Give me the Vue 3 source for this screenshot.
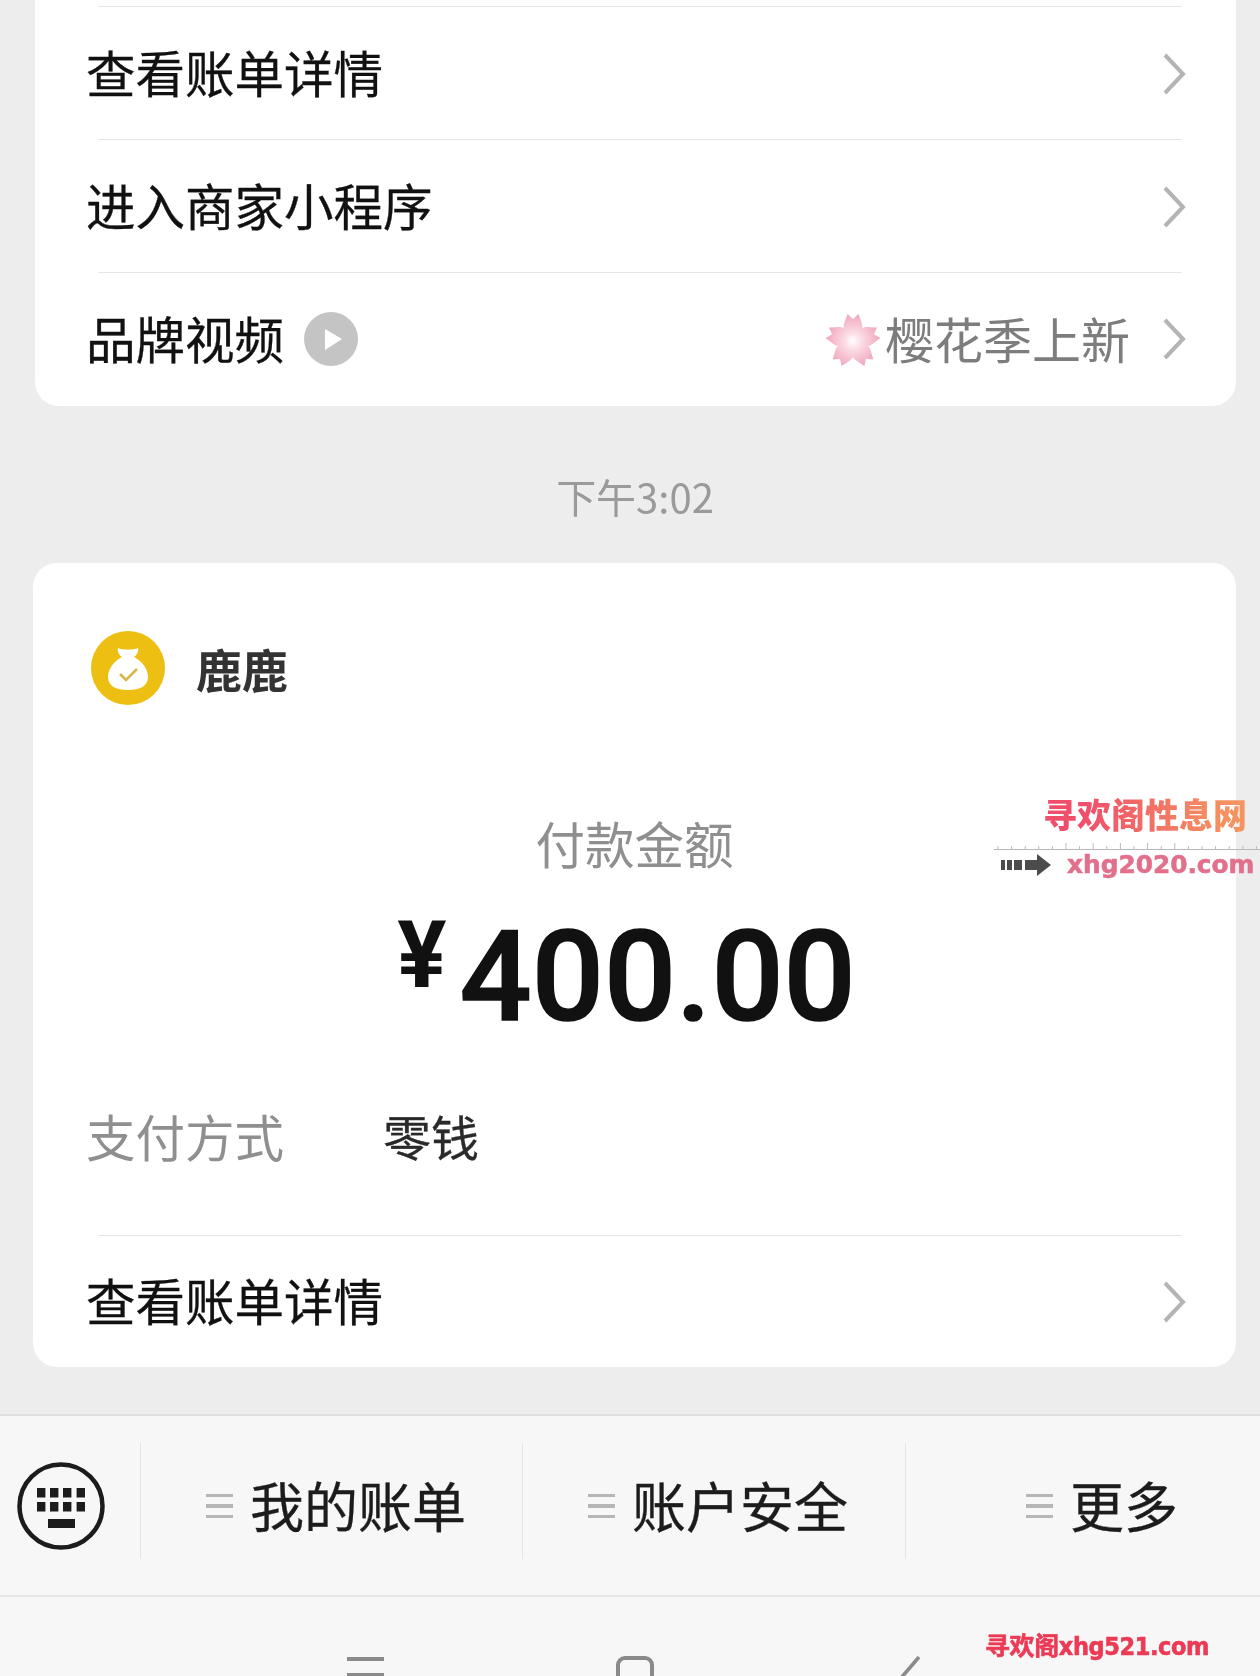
<script setup>
const menus = [
  { label: '我的账单', cls: 'm1' },
  { label: '账户安全', cls: 'm2' },
  { label: '更多', cls: 'm3' }
]
const ticks = Array.from({ length: 20 }, (_, i) => 4 + i * 13.6)
const petals = [0, 72, 144, 216, 288]
</script>

<template>
  <div class="page">
    <section class="card card-top">
      <div class="sliver"></div>
      <div class="row line"><span class="row-text">查看账单详情</span><svg class="chev" viewBox="0 0 24 44"><path d="M3 3 L21 22 L3 41" /></svg></div>
      <div class="row line"><span class="row-text">进入商家小程序</span><svg class="chev" viewBox="0 0 24 44"><path d="M3 3 L21 22 L3 41" /></svg></div>
      <div class="row">
        <span class="row-text">品牌视频</span>
        <svg class="play" viewBox="0 0 54 54"><circle cx="27" cy="27" r="27" fill="#c4c4c4" /><path d="M21 17 L38 27 L21 38 Z" fill="#fff" /></svg>
        <span class="spacer"></span>
        <svg class="sakura" viewBox="-28 -28 56 54">
          <defs>
            <radialGradient id="petal" gradientUnits="userSpaceOnUse" cx="0" cy="0" r="28">
              <stop offset="0" stop-color="#ffffff" />
              <stop offset="0.3" stop-color="#fbdde6" />
              <stop offset="1" stop-color="#f2a3bb" />
            </radialGradient>
          </defs>
          <g v-for="a in petals" :key="a" :transform="`rotate(${a})`">
            <path fill="url(#petal)" d="M0 0 C-7 -4 -12 -12 -8 -20 L-5.5 -27 L0 -22 L5.5 -27 L8 -20 C12 -12 7 -4 0 0 Z" />
          </g>
        </svg>
        <span class="promo">樱花季上新</span>
        <svg class="chev" viewBox="0 0 24 44"><path d="M3 3 L21 22 L3 41" /></svg>
      </div>
    </section>

    <div class="time">下午3:02</div>

    <section class="card card-pay">
      <header class="payee">
        <svg class="logo" viewBox="0 0 74 74">
          <circle cx="37" cy="37" r="37" fill="#edbf12" />
          <path fill="#fff" d="M27 17 C31 19 43 19 47 17 C48 20 46 24 43 26 C51 30 57 38 57 46 C57 55 49 59 37 59 C25 59 17 55 17 46 C17 38 23 30 31 26 C28 24 26 20 27 17 Z" />
          <path d="M29 43 L35 49 L46 38" fill="none" stroke="#d9b64a" stroke-width="2.6" />
        </svg>
        <span class="name">鹿鹿</span>
      </header>
      <div class="pay-title">付款金额</div>
      <div class="amount"><span class="yen">¥</span><span class="num">400.00</span></div>
      <div class="method"><span class="method-key">支付方式</span><span class="method-val">零钱</span></div>
      <div class="divider"></div>
      <div class="row last"><span class="row-text">查看账单详情</span><svg class="chev" viewBox="0 0 24 44"><path d="M3 3 L21 22 L3 41" /></svg></div>
    </section>

    <nav class="menubar">
      <div class="kbd-cell">
        <svg class="kbd" viewBox="0 0 88 88">
          <circle cx="44" cy="44" r="41.5" fill="none" stroke="#1c1c1c" stroke-width="4.5" />
          <g fill="#1c1c1c">
            <rect x="20" y="26" width="8.4" height="9.5" /><rect x="33" y="26" width="8.4" height="9.5" /><rect x="46" y="26" width="8.4" height="9.5" /><rect x="59.6" y="26" width="8.4" height="9.5" />
            <rect x="20" y="40" width="8.4" height="9.5" /><rect x="33" y="40" width="8.4" height="9.5" /><rect x="46" y="40" width="8.4" height="9.5" /><rect x="59.6" y="40" width="8.4" height="9.5" />
            <rect x="31" y="57" width="27" height="9" />
          </g>
        </svg>
      </div>
      <div v-for="m in menus" :key="m.label" class="menu" :class="m.cls">
        <span class="ham"><i></i><i></i><i></i></span>
        <span class="menu-text">{{ m.label }}</span>
      </div>
    </nav>

    <footer class="sysnav">
      <span class="sys-menu"><i></i><i></i><i></i></span>
      <span class="sys-home"></span>
      <svg class="sys-back" viewBox="0 0 24 24"><path d="M20 1 L2 22" /></svg>
    </footer>

    <aside class="mark">
      <div class="mark-cn">寻欢阁性息网</div>
      <svg class="mark-rule" viewBox="0 0 266 10">
        <path d="M0 9.5 H266" stroke="#b9b9b9" stroke-width="1" />
        <path v-for="t in ticks" :key="t" :d="`M${t} 9 V${t % 3 < 1 ? 3 : 6}`" stroke="#bbb" stroke-width="1" />
      </svg>
      <div class="mark-line">
        <svg class="mark-arrow" viewBox="0 0 50 22">
          <g fill="#4c4c4c"><rect x="0" y="6" width="4" height="10" /><rect x="6" y="6" width="5" height="10" /><rect x="13" y="6" width="8" height="10" /><path d="M24 6 H36 V0 L50 11 L36 22 V16 H24 Z" /></g>
        </svg>
        <span class="mark-url">xhg2020.com</span>
      </div>
    </aside>
    <div class="mark-foot">寻欢阁xhg521.com</div>
  </div>
</template>

<style scoped>
.page {
  position: relative;
  width: 1260px;
  height: 1676px;
  overflow: hidden;
  background: #ededed;
  font-family: "Noto Sans CJK SC", "Noto Sans", sans-serif;
  color: #111;
  filter: blur(0.6px);
}
.card {
  background: #fff;
  margin: 0 24px 0 35px;
  border-radius: 0 0 24px 24px;
}
.card-top { height: 406px; }
.sliver { height: 6px; margin: 0 54px 0 63px; border-bottom: 1px solid #e6e6e6; box-sizing: content-box; }
.row {
  display: flex;
  align-items: center;
  height: 132px;
  padding: 0 50px 0 53px;
  position: relative;
  box-sizing: border-box;
}
.row.line { height: 133px; }
.row.line::after {
  content: "";
  position: absolute;
  left: 63px;
  right: 54px;
  bottom: 0;
  height: 1px;
  background: #e6e6e6;
}
.row.last { height: 131px; padding-left: 55px; padding-right: 50px; }
.row-text {
  font-size: 49.5px;
  line-height: 60px;
  flex: 1 0 auto;
  margin-bottom: 3px;
  margin-left: -2px;
  -webkit-text-stroke: 0.3px #111;
}
.row .row-text:has(+ .play) { flex: 0 0 auto; }
.chev { width: 24px; height: 44px; flex: none; }
.chev path { fill: none; stroke: #b4b4b4; stroke-width: 4; }
.play { width: 54px; height: 54px; margin-left: 20px; flex: none; }
.spacer { flex: 1; }
.sakura { width: 56px; height: 54px; flex: none; margin-right: 4px; margin-top: 2px; }
.promo { font-size: 49px; line-height: 60px; color: #7d7d7d; margin-right: 32px; margin-bottom: 3px; }

.time {
  height: 157px;
  box-sizing: border-box;
  padding: 59px 0 0 10px;
  text-align: center;
  font-size: 40px;
  line-height: 62px;
  color: #9a9a9a;
}

.card-pay {
  margin-left: 33px;
  border-radius: 24px;
  height: 804px;
  padding-top: 68px;
  box-sizing: border-box;
}
.payee { display: flex; align-items: center; height: 74px; padding-left: 58px; gap: 31px; }
.logo { width: 74px; height: 74px; }
.name { font-size: 46px; font-weight: 700; color: #333; line-height: 60px; }
.pay-title {
  margin-top: 108px;
  text-align: center;
  font-size: 49.5px;
  line-height: 60px;
  color: #8f8f8f;
}
.amount {
  margin-top: 40px;
  height: 127px;
  display: flex;
  justify-content: center;
  font-family: Roboto, "Liberation Sans", sans-serif;
  font-weight: 500;
  color: #111;
}
.yen { font-size: 92px; line-height: 86px; font-weight: 700; margin-right: 13px; margin-left: -16px; }
.num { font-size: 127px; line-height: 127px; font-weight: 500; -webkit-text-stroke: 1.5px #111; }
.method { margin-top: 65px; display: flex; padding-left: 53px; height: 60px; align-items: center; font-size: 49.5px; }
.method-key { color: #8f8f8f; width: 297px; }
.method-val { color: #2a2a2a; font-size: 48px; -webkit-text-stroke: 0.3px #2a2a2a; }
.divider { margin: 70px 54px 0 65px; height: 1px; background: #e6e6e6; }

.menubar {
  margin-top: 47px;
  height: 183px;
  box-sizing: border-box;
  background: #f7f7f7;
  border-top: 2px solid #e0e0e0;
  border-bottom: 2px solid #e8e8e8;
  display: flex;
  align-items: center;
  position: relative;
}
.kbd-cell { width: 140px; display: flex; padding-left: 17px; box-sizing: border-box; flex: none; }
.kbd { width: 88px; height: 88px; }
.menu {
  height: 116px;
  align-self: flex-start;
  margin-top: 27px;
  padding-top: 10px;
  display: flex;
  align-items: center;
  gap: 17px;
  border-left: 1px solid #e4e4e4;
  box-sizing: border-box;
  flex: none;
}
.m1 { width: 382px; padding-left: 65px; }
.m2 { width: 383px; padding-left: 65px; }
.m3 { width: 355px; padding-left: 120px; }
.ham { display: flex; flex-direction: column; gap: 7px; width: 27px; }
.ham i { display: block; height: 3.6px; background: #b6b6b6; }
.menu-text {
  font-size: 54px;
  line-height: 70px;
  color: #1c1c1c;
  white-space: nowrap;
  margin-bottom: 3px;
  -webkit-text-stroke: 0.3px #1c1c1c;
}

.sysnav {
  background: #f7f7f7;
  height: 79px;
  position: relative;
  display: flex;
  align-items: flex-start;
  padding: 59px 0 0 347px;
  box-sizing: border-box;
}
.sys-menu { width: 37px; display: flex; flex-direction: column; gap: 12px; flex: none; margin-top: 1px; }
.sys-menu i { display: block; height: 4px; background: #8a8a8a; }
.sys-home {
  width: 38px;
  height: 50px;
  flex: none;
  margin-left: 232px;
  box-sizing: border-box;
  border: 4px solid #8a8a8a;
  border-radius: 9px;
}
.sys-back { width: 24px; height: 24px; margin-left: 245px; flex: none; }
.sys-back path { fill: none; stroke: #8a8a8a; stroke-width: 3.6; }

.mark {
  position: absolute;
  left: 994px;
  top: 791px;
  width: 266px;
}
.mark-cn {
  font-size: 34px;
  line-height: 46px;
  font-weight: 900;
  padding-left: 49px;
  white-space: nowrap;
  background: linear-gradient(90deg, #ef4f6b 30%, #f48a62 70%, #f6a45c 100%);
  -webkit-background-clip: text;
  background-clip: text;
  color: transparent;
  width: 252px;
  box-sizing: content-box;
}
.mark-rule { display: block; width: 266px; height: 10px; margin-top: 3px; }
.mark-line { display: flex; align-items: center; padding-left: 7px; gap: 16px; margin-top: 2px; }
.mark-arrow { width: 50px; height: 22px; flex: none; }
.mark-url {
  font-family: "DejaVu Sans", sans-serif;
  font-weight: 700;
  font-size: 24.8px;
  line-height: 26px;
  color: #e2708c;
  white-space: nowrap;
  -webkit-text-stroke: 0.6px #e2708c;
}
.mark-foot {
  position: absolute;
  left: 985px;
  top: 1630px;
  font-size: 25px;
  line-height: 34px;
  font-weight: 700;
  color: #ec3a55;
  white-space: nowrap;
  font-family: "DejaVu Sans Condensed", "DejaVu Sans", "Noto Sans CJK SC", sans-serif;
  letter-spacing: -0.4px;
  -webkit-text-stroke: 0.6px #ec3a55;
}
</style>
